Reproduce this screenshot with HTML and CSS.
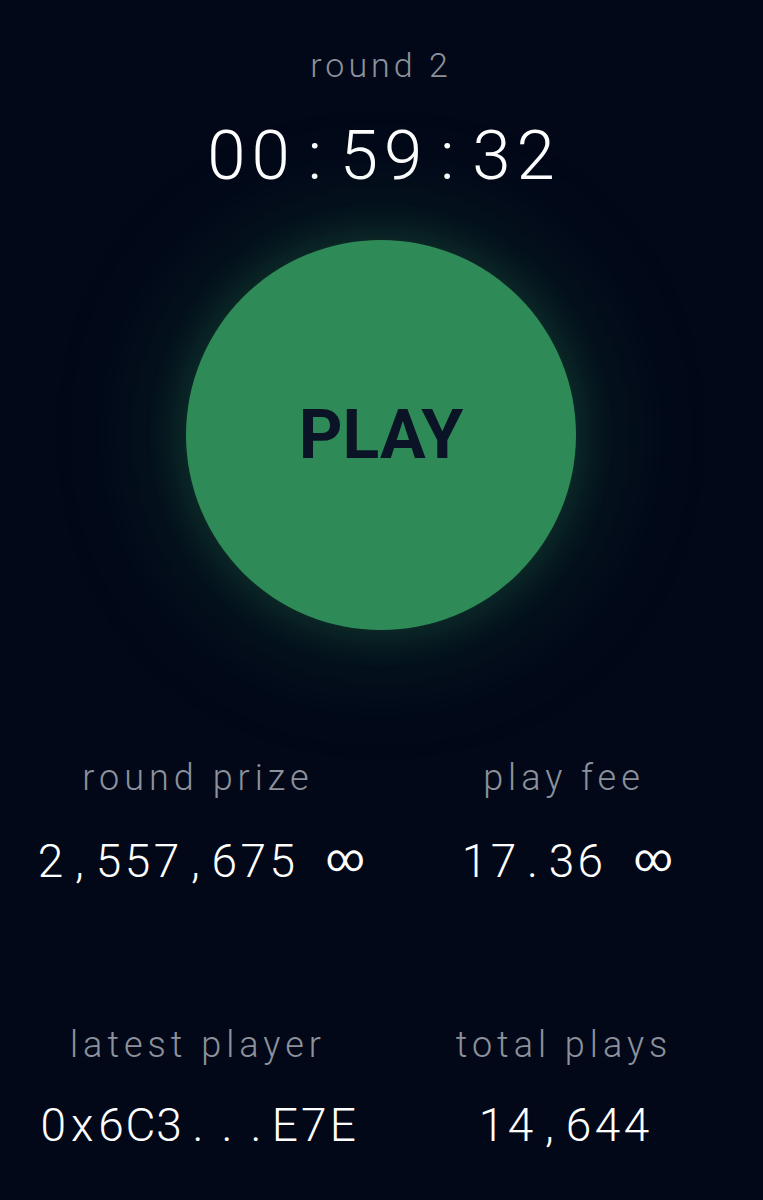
FILE: index.html
```html
<!DOCTYPE html>
<html>
<head>
    <title>PLAY</title>
    <link rel="stylesheet" href="styles.css">
</head>
<body>
    <div class="game">
        <div class="round">round 2</div>

        <!-- each character sits in its own cell so the digits line up like a mono face -->
        <div class="timer mono"><span>0</span><span>0</span><span>:</span><span>5</span><span>9</span><span>:</span><span>3</span><span>2</span></div>

        <div class="play-wrap">
            <button class="play-button" type="button">PLAY</button>
        </div>

        <div class="stats">
            <div class="stat">
                <div class="stat-label">round prize</div>
                <div class="stat-value mono"><span>2</span><span>,</span><span>5</span><span>5</span><span>7</span><span>,</span><span>6</span><span>7</span><span>5</span><span> </span><span class="inf">∞</span></div>
            </div>
            <div class="stat">
                <div class="stat-label">play fee</div>
                <div class="stat-value mono"><span>1</span><span>7</span><span>.</span><span>3</span><span>6</span><span> </span><span class="inf">∞</span></div>
            </div>
            <div class="stat">
                <div class="stat-label">latest player</div>
                <div class="stat-value mono"><span>0</span><span>x</span><span>6</span><span>C</span><span>3</span><span>.</span><span>.</span><span>.</span><span>E</span><span>7</span><span>E</span></div>
            </div>
            <div class="stat">
                <div class="stat-label">total plays</div>
                <div class="stat-value mono"><span>1</span><span>4</span><span>,</span><span>6</span><span>4</span><span>4</span></div>
            </div>
        </div>
    </div>
</body>
</html>
```
FILE: styles.css
```css
body {
    margin: 0;
    background: #020818;
    font-family: "Roboto", "Liberation Sans", sans-serif;
    font-weight: 300;
    color: #ffffff;
}

.game {
    display: flex;
    flex-direction: column;
    align-items: center;
    padding: 45px 16px 0 15px;
}

.round {
    font-size: 34px;
    line-height: 40px;
    letter-spacing: 4px;
    color: #8c919b;
}

.mono span {
    display: inline-block;
    width: 0.64em;
    text-align: center;
}

.timer {
    margin-top: 31px;
    font-size: 69px;
    line-height: 80px;
}

.play-wrap {
    margin-top: 44px;
}

.play-button {
    width: 390px;
    height: 390px;
    border: none;
    border-radius: 50%;
    background: #2e8b57;
    box-shadow: 0 0 40px rgba(46, 139, 87, 0.25), 0 0 120px 10px rgba(46, 139, 87, 0.27);
    font-family: "Roboto", "Liberation Sans", sans-serif;
    font-weight: 700;
    font-size: 68px;
    color: #0b1426;
    cursor: pointer;
}

.stats {
    width: 100%;
    margin-top: 128px;
    display: grid;
    grid-template-columns: 1fr 1fr;
    row-gap: 139px;
}

.stat {
    display: flex;
    flex-direction: column;
    align-items: center;
}

.stat-label {
    font-size: 36px;
    line-height: 40px;
    letter-spacing: 5px;
    color: #8c919b;
}

.stat-value {
    margin-top: 35px;
    font-size: 46px;
    line-height: 50px;
}

.stat-value span {
    width: 0.63em;
}

.stat-value .inf {
    width: 0.9em;
    font-size: 38px;
    font-weight: 400;
    vertical-align: 6px;
}
```
